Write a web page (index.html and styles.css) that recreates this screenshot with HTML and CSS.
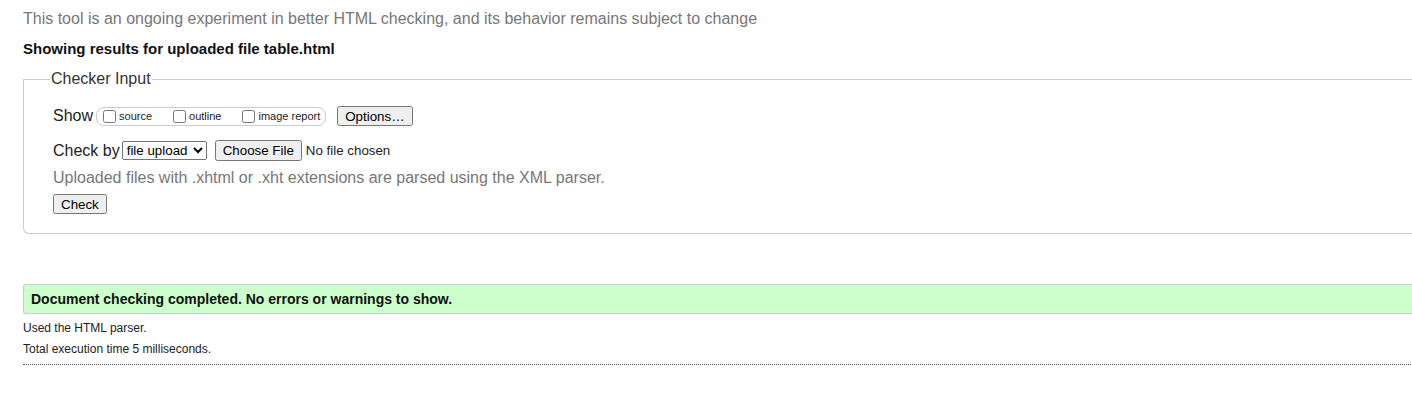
FILE: index.html
```html
<!DOCTYPE html>
<html>
<head>
<meta charset="utf-8">
<title>Nu Html Checker</title>
<link rel="stylesheet" href="styles.css">
</head>
<body>
<div class="page">
  <p class="intro">This tool is an ongoing experiment in better HTML checking, and its behavior remains subject to change</p>
  <p class="showing">Showing results for uploaded file table.html</p>
  <fieldset class="input">
    <legend>Checker Input</legend>
    <div class="row show-row">
      <span class="lbl">Show</span>
      <span class="group">
        <label class="opt"><input type="checkbox">source</label>
        <label class="opt"><input type="checkbox">outline</label>
        <label class="opt"><input type="checkbox">image report</label>
      </span>
      <button class="btn">Options…</button>
    </div>
    <div class="row check-row">
      <span class="lbl">Check by</span>
      <select class="sel"><option>file upload</option></select>
      <input type="file" class="file">
    </div>
    <p class="note">Uploaded files with .xhtml or .xht extensions are parsed using the XML parser.</p>
    <div class="row check-btn-row"><button class="btn">Check</button></div>
  </fieldset>
  <p class="success">Document checking completed. No errors or warnings to show.</p>
  <p class="small">Used the HTML parser.</p>
  <p class="small">Total execution time 5 milliseconds.</p>
  <hr class="dots">
</div>
</body>
</html>
```
FILE: styles.css
```css
html, body {
  margin: 0;
  padding: 0;
  overflow: hidden;
  background: #fff;
}
body {
  font-family: "Liberation Sans", Arial, sans-serif;
  color: #222;
}
.page {
  padding: 10px 0 0 23px;
  width: 1420px;
}
p { margin: 0; }
.intro {
  font-size: 16px;
  line-height: 18px;
  color: #777;
}
.showing {
  margin-top: 12px;
  font-size: 15px;
  line-height: 18px;
  font-weight: bold;
  color: #111;
}
.input {
  margin: 12px 0 0 0;
  padding: 18px 0 19px 29px;
  border: 1px solid #ccc;
  border-right: none;
  border-radius: 0 0 0 6px;
}
.input legend {
  font-size: 16px;
  color: #333;
  padding: 0 1px;
  margin-left: -3px;
  line-height: 18px;
}
.row {
  display: flex;
  align-items: center;
}
.lbl {
  font-size: 16px;
  color: #222;
}
.group {
  display: inline-flex;
  align-items: center;
  margin-left: 3px;
  border: 1px solid #ccc;
  border-radius: 8px;
  padding: 0 5px 0 3px;
  height: 17px;
}
.opt {
  display: inline-flex;
  align-items: center;
  font-size: 11px;
  margin-right: 18px;
}
.opt:last-child { margin-right: 0; }
.opt input {
  margin: 0 3px 0 3px;
  width: 13px;
  height: 13px;
}
.btn {
  font-family: "Liberation Sans", Arial, sans-serif;
  font-size: 13.33px;
  margin-left: 11px;
  padding: 1px 6px;
  height: 20px;
  color: #000;
}
.row .btn:first-child { margin-left: 0; }
.check-row { margin-top: 14px; }
.sel {
  font-family: "Liberation Sans", Arial, sans-serif;
  font-size: 13.33px;
  margin-left: 2px;
  height: 19px;
  padding-right: 2px;
}
.file {
  font-family: "Liberation Sans", Arial, sans-serif;
  font-size: 13.33px;
  margin-left: 8px;
}
.note {
  margin-top: 8px;
  font-size: 16px;
  line-height: 18px;
  color: #777;
}
.check-btn-row { margin-top: 7px; }
.success {
  margin-top: 50px;
  background: #cfc;
  border: 1px solid #ccc;
  border-right: none;
  border-radius: 3px 0 0 3px;
  padding: 6px 0 6px 7px;
  font-size: 14px;
  line-height: 16px;
  font-weight: bold;
  color: #111;
}
.small {
  font-size: 12px;
  line-height: 14px;
  color: #222;
  margin-top: 7px;
}
.dots {
  margin: 8px 0 0 0;
  border: none;
  border-top: 1px dotted #555;
  height: 0;
}
```
